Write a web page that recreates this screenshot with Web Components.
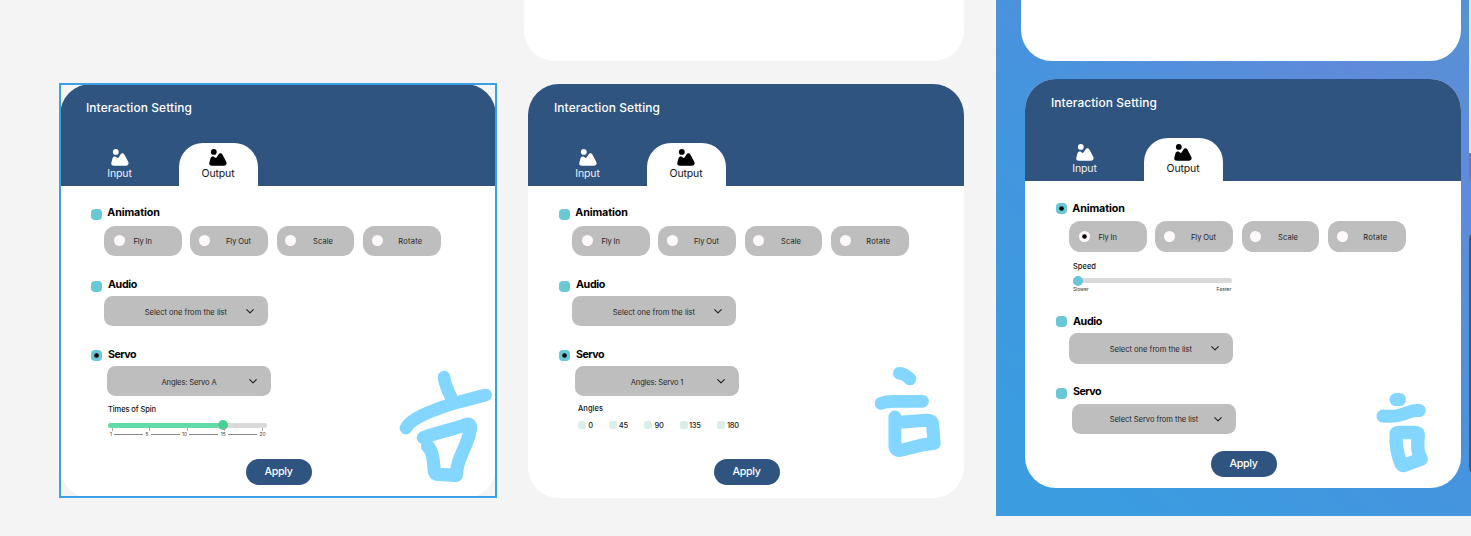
<!DOCTYPE html>
<html lang="en">
<head>
<meta charset="utf-8">
<title>Interaction Setting</title>
<style>
html,body{margin:0;height:100%;overflow:hidden}
body{font-family:Inter,"Open Sans",sans-serif;background:#f4f4f4}
</style>
</head>
<body>
<design-canvas></design-canvas>
<script>
const define=(name,html,setup)=>customElements.define(name,class extends HTMLElement{
  connectedCallback(){
    if(this.shadowRoot)return;
    const root=this.attachShadow({mode:'open'});
    root.innerHTML=typeof html==='function'?html(this):html;
    if(setup)setup(this,root);
  }
});

/* One line of text, tracked so that it fills the width given in "w". */
define('fit-text',e=>`<style>
:host{display:block;flex:none;white-space:nowrap;width:${e.getAttribute('w')}px;line-height:1.2}
span{display:inline-block}
</style><span><slot></slot></span>`,(e,r)=>{
  const s=r.querySelector('span'),n=e.textContent.length;
  const d=(+e.getAttribute('w')-s.getBoundingClientRect().width)/n;
  s.style.letterSpacing=d.toFixed(3)+'px';
});

define('picture-icon',`<style>:host{display:block;width:18px;height:17px}svg{display:block}</style>
<svg width="18" height="17" viewBox="0 0 18 17" fill="currentColor"><circle cx="4.8" cy="2.9" r="2.9"/>
<path d="M.4 13.6 L1.5 9.300 C2 7.500 4 7 5.200 7.900 L6.300 8.800 Q7 9.300 7.500 8.500 L9.500 5.400 C10.500 3.900 12.500 3.900 13.400 5.500 L17.200 12.700 C18.300 14.800 17 16.800 14.900 16.800 H2.900 C1 16.800 -.2 15.400 .4 13.6Z"/></svg>`);

define('tab-item',`<style>
:host{display:flex;flex-direction:column;align-items:center;box-sizing:border-box;width:79px;height:43px;padding-top:6px;gap:2px;color:#fff;font-size:10.5px}
:host([active]){background:#fff;color:#000;border-radius:24px 24px 0 0}
::slotted(fit-text){opacity:.92}
</style><picture-icon></picture-icon><slot></slot>`);

define('check-mark',`<style>
:host{display:grid;place-items:center;flex:none;width:11px;height:11px;border-radius:4px;background:#6ac8d5}
svg{display:none}
:host([on]) svg{display:block}
</style><svg width="11" height="11"><circle cx="5.5" cy="5.5" r="2.3"/></svg>`);

define('setting-section',e=>`<style>
:host{display:block;height:${e.getAttribute('h')}px}
header{display:flex;align-items:center;gap:${e.getAttribute('gap')||6}px;height:11px;padding-left:31px;font-size:10.7px;font-weight:700;color:#000}
.t{transform:translateY(${e.getAttribute('lift')||0}px)}
.c{padding-top:${e.getAttribute('space')}px}
</style><header><check-mark ${e.hasAttribute('on')?'on':''}></check-mark><fit-text class="t" w="${e.getAttribute('w')}">${e.getAttribute('label')}</fit-text></header><div class="c"><slot></slot></div>`);

define('radio-chip',e=>`<style>
:host{display:flex;align-items:center;box-sizing:border-box;width:77.6px;height:30.4px;border-radius:11.5px;background:#bebebe;padding-left:${e.getAttribute('pad')}px;font-size:7.5px;color:#1d1d1d}
i{width:11px;height:11px;border-radius:50%;background:#fdf9fa;flex:none;margin-right:${e.getAttribute('gap')}px}
svg{display:none}
:host([on]) svg{display:block}
::slotted(fit-text){margin-top:1.3px}
</style><i><svg width="11" height="11"><circle cx="5.500" cy="5.500" r="2.3"/></svg></i><slot></slot>`);

define('chip-row',e=>`<style>
:host{display:flex;gap:8.8px;padding-left:44px}
.r{transform:translateY(.3px)}
</style>
<radio-chip pad="10.2" gap="8.3" ${e.hasAttribute('on')?'on':''}><fit-text w="18.3">Fly In</fit-text></radio-chip>
<radio-chip pad="9" gap="15.6"><fit-text w="24.8">Fly Out</fit-text></radio-chip>
<radio-chip pad="8.5" gap="16.8"><fit-text w="20">Scale</fit-text></radio-chip>
<radio-chip pad="8.5" gap="15.7"><fit-text class="r" w="24">Rotate</fit-text></radio-chip>`);

define('select-box',e=>`<style>
:host{display:flex;align-items:center;justify-content:space-between;box-sizing:border-box;width:164px;height:30.3px;margin-left:${e.getAttribute('x')}px;border-radius:8.5px;background:#bebebe;padding:0 13.9px 0 ${e.getAttribute('pad')}px;font-size:7.6px;color:#262626}
svg{display:block;margin-top:1px}
::slotted(fit-text){margin-top:2px}
</style><slot></slot><svg width="8" height="5" viewBox="0 0 8 5" fill="none" stroke="#222" stroke-width="1.1" stroke-linecap="round" stroke-linejoin="round"><path d="M.7.6 4 3.9 7.3.6"/></svg>`);

define('field-label',`<style>:host{display:flex;align-items:center;height:10px;padding-left:48px;font-size:7.5px;font-weight:500;color:#111}</style><slot></slot>`);

define('range-slider',e=>`<style>
:host{display:block;margin-left:48px;width:158.5px}
.bar{display:flex;align-items:center;height:10px}
.rail{flex:1;height:5px;border-radius:3px;background:#d9d9d9;display:flex;align-items:center}
.fill{width:${e.getAttribute('value')}px;height:5px;border-radius:3px 0 0 3px;background:#62dba6}
.knob{width:10px;height:10px;border-radius:50%;background:${e.getAttribute('color')}}
</style><div class="bar"><div class="rail"><div class="fill"></div><div class="knob"></div></div></div><slot></slot>`);

define('tick-scale',`<style>
:host{display:block;font-size:4.8px;color:#333}
.ticks{display:flex;justify-content:space-between;height:3px;margin:-2px 4px 0 4px}
.ticks i{width:1px;background:#aaa}
.row{display:flex;align-items:center;gap:2.4px;height:7px;padding:0 1px 0 2px}
.row i{flex:1;height:1px;background:#888}
</style><div class="ticks"><i></i><i></i><i></i><i></i><i></i></div>
<div class="row"><fit-text w="1.7">1</fit-text><i></i><fit-text w="3">5</fit-text><i></i><fit-text w="5">10</fit-text><i></i><fit-text w="5">15</fit-text><i></i><fit-text w="6">20</fit-text></div>`);

define('end-labels',`<style>:host{display:flex;justify-content:space-between;height:6px;margin-top:1px;font-size:4.9px;color:#333}</style>
<fit-text w="15.7">Slower</fit-text><fit-text w="15">Faster</fit-text>`);

define('angle-options',`<style>
:host{display:flex;padding-left:50px;height:9px;font-size:7.5px;font-weight:500;color:#222}
span{display:flex;align-items:center;gap:2.2px}
i{width:8px;height:8px;border-radius:2.5px;background:#daefe7}
</style>
<span style="width:30.5px"><i></i><fit-text w="4.7">0</fit-text></span>
<span style="width:35.7px"><i></i><fit-text w="9.3">45</fit-text></span>
<span style="width:35.5px"><i></i><fit-text w="9.2">90</fit-text></span>
<span style="width:37.5px;gap:1.2px"><i></i><fit-text w="11.7">135</fit-text></span>
<span style="gap:1.8px"><i></i><fit-text w="12">180</fit-text></span>`);

define('apply-button',`<style>
:host{display:flex;align-items:center;justify-content:center;width:66px;height:26.4px;border-radius:13px;background:#2f5480;color:#fff;font-size:10.7px;font-weight:500;margin-left:185.5px}
fit-text{margin-top:1px}
</style><fit-text w="28.2">Apply</fit-text>`);

define('setting-card',e=>`<style>
:host{display:block;width:436px;height:${e.getAttribute('h')}px;border-radius:31px;background:#fff;overflow:hidden}
header{box-sizing:border-box;height:102.3px;background:#2f5480;padding:17.6px 0 0 26px;color:#fff;font-size:11.9px;font-weight:500}
.title{height:24.7px}
nav{display:flex;gap:19.5px;margin-left:-6px;padding-top:17px;font-weight:400}
main{padding-top:${e.getAttribute('top')}px}
</style><header><div class="title"><fit-text w="106">Interaction Setting</fit-text></div>
<nav><tab-item><fit-text w="24.5">Input</fit-text></tab-item><tab-item active><fit-text w="33">Output</fit-text></tab-item></nav></header>
<main><slot></slot></main>`);

define('design-canvas',`<style>
:host{display:block;position:relative;width:1471px;height:536px;overflow:hidden;background:#f4f4f4}
.board{position:absolute;left:995.5px;top:0;width:475.5px;height:515.6px;background:linear-gradient(42deg,#3b9ce0 12%,#4495de 46%,#608adb 82%,#5194d0 100%)}
.panel{position:absolute;top:-40px;width:440px;background:#fff;border-radius:31px}
setting-card{position:absolute}
.sel{position:absolute;left:59px;top:83px;width:434px;height:411px;border:2px solid #3d9fe4}
.edge{position:absolute;left:1468.7px;width:10px}
svg{position:absolute;left:0;top:0}
</style>
<div class="board"></div>
<div class="panel" style="left:524.4px;height:101.4px"></div>
<div class="panel" style="left:1021px;height:101.3px"></div>
<div class="edge" style="top:145px;height:39px;background:#6b7b98;border-radius:0 0 0 8px"></div>
<div class="edge" style="top:0;height:153.3px;background:#dde4f3"></div>
<div class="edge" style="top:231px;height:244px;background:#46566f;border-radius:8px 0 0 8px"></div>

<setting-card h="414" top="23" style="left:60px;top:83.7px">
  <setting-section label="Animation" w="52.4" lift="-.6" gap="5.3" space="5.7" h="71.7"><chip-row></chip-row></setting-section>
  <setting-section label="Audio" w="29" lift="-1" space="4.5" h="69"><select-box x="44" pad="40.7"><fit-text w="82.3">Select one from the list</fit-text></select-box></setting-section>
  <setting-section label="Servo" w="28" lift="-.4" space="5.3" h="109.3" on>
    <select-box x="47" pad="54.5"><fit-text w="55">Angles: Servo A</fit-text></select-box>
    <field-label style="margin-top:8.6px"><fit-text w="48">Times of Spin</fit-text></field-label>
    <range-slider value="109.5" color="#48cf93" style="margin-top:5.4px"><tick-scale></tick-scale></range-slider>
  </setting-section>
  <apply-button></apply-button>
</setting-card>

<setting-card h="414" top="23" style="left:528px;top:83.7px">
  <setting-section label="Animation" w="52.4" lift="-.6" gap="5.3" space="5.7" h="71.7"><chip-row></chip-row></setting-section>
  <setting-section label="Audio" w="29" lift="-1" space="4.5" h="69"><select-box x="44" pad="40.7"><fit-text w="82.3">Select one from the list</fit-text></select-box></setting-section>
  <setting-section label="Servo" w="28" lift="-.4" space="5.3" h="109.3" on>
    <select-box x="47" pad="55.8"><fit-text w="52.3">Angles: Servo 1</fit-text></select-box>
    <field-label style="margin-top:7.3px;padding-left:50px"><fit-text w="25">Angles</fit-text></field-label>
    <angle-options style="margin-top:7.4px"></angle-options>
  </setting-section>
  <apply-button></apply-button>
</setting-card>

<setting-card h="409" top="21.7" style="left:1025px;top:78.8px">
  <setting-section label="Animation" w="52.4" lift="1" gap="5.3" space="7.7" h="112.8" on><chip-row on></chip-row>
    <field-label style="margin-top:10px"><fit-text w="23">Speed</fit-text></field-label>
    <range-slider value="0" color="#67c7d6" style="margin-top:3.7px"><end-labels></end-labels></range-slider>
  </setting-section>
  <setting-section label="Audio" w="29" lift="1" space="6.7" h="72.2"><select-box x="44" pad="40.7"><fit-text w="82.3">Select one from the list</fit-text></select-box></setting-section>
  <setting-section label="Servo" w="28" lift="-1" space="5" h="63.2"><select-box x="47" pad="37.7"><fit-text w="88.5">Select Servo from the list</fit-text></select-box></setting-section>
  <apply-button></apply-button>
</setting-card>

<svg width="1471" height="536" fill="none" stroke="#82d6ff" stroke-width="12.7" stroke-linecap="round" stroke-linejoin="round">
<path d="M444 377.2Q445 385 451.5 398"/>
<path d="M406 428C411 418 431 411 450 404.5Q468 399.5 485.6 395"/>
<path d="M423.3 437.7C434 433 452 430 466.5 424.3Q472 423.5 470 431C467 448 456.500 458 456.300 475.400L438 474.300Q434.500 474.300 434.300 471C433 460 433.500 452 427.500 446" stroke-width="13.2"/>
<path d="M899.3 373.3Q904 373 910 379"/>
<path d="M881 403.3Q886 401.300 895 401.300H922.5"/>
<path d="M894.9 417V446Q895.500 451.500 901 450.300C912 448 920 444.200 934.200 443.500L932.400 423Q931.700 420 926.500 420.200L896 422.500" stroke-width="12.9"/>
<path d="M1396 399.600H1399.500" stroke-width="13"/>
<path d="M1383 416.100C1398 417 1402 414.500 1409 412Q1414 410.200 1419.300 410.600" stroke-width="13"/>
<path d="M1396.200 433.500Q1396.500 432.500 1400 432.500H1415Q1418.500 432.500 1418.200 435.500C1417.500 446 1417 452 1421.200 459L1404.500 465.300Q1402 466 1401 463.500C1397.500 455 1395.500 446 1396.200 433.500Z" stroke-width="13.4"/>
</svg>
<div class="sel"></div>`);
</script>
</body>
</html>
